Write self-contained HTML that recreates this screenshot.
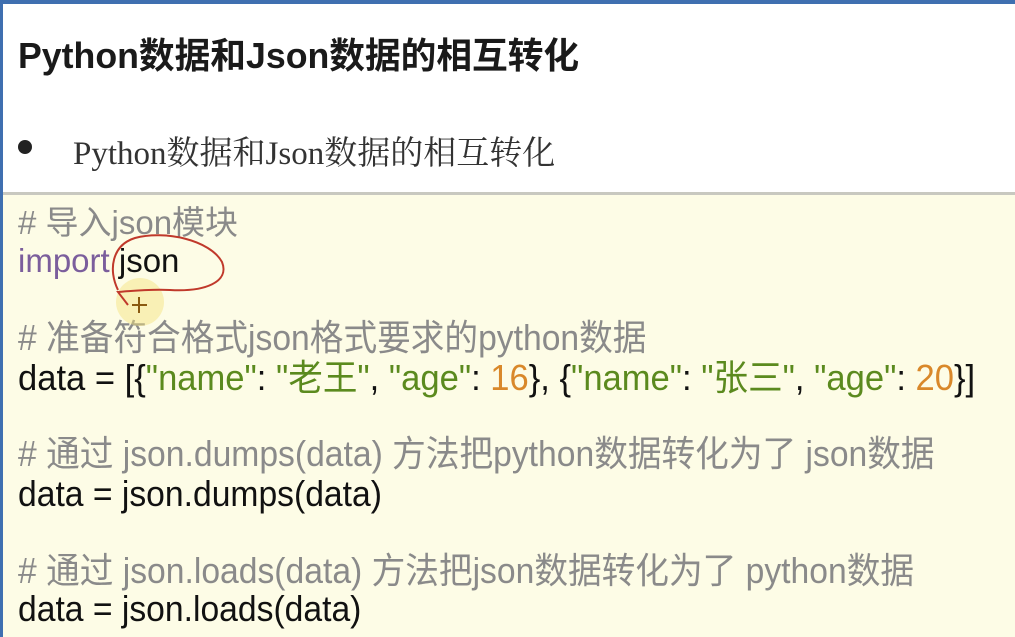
<!DOCTYPE html>
<html><head><meta charset="utf-8"><style>
html,body{margin:0;padding:0}
body{width:1015px;height:637px;overflow:hidden;position:relative;background:#fff;font-family:"Liberation Sans","Noto Sans CJK SC",sans-serif}
.top{position:absolute;left:0;top:0;width:1015px;height:4px;background:#3f6fb0}
.left{position:absolute;left:0;top:0;width:3px;height:637px;background:#3f6fb0}
.title{position:absolute;left:18px;top:28px;font-size:35.7px;font-weight:bold;color:#1a1a1a;white-space:nowrap}
.dot{position:absolute;left:18px;top:140px;width:14px;height:14px;border-radius:50%;background:#222}
.sub{position:absolute;left:73px;top:127px;font-family:"Liberation Serif","Noto Serif CJK SC",serif;font-size:33px;color:#333;white-space:nowrap}
.hr{position:absolute;left:3px;top:192px;width:1012px;height:3px;background:#c8c8c0}
.code{position:absolute;left:3px;top:195px;width:1012px;height:442px;background:#fdfce6}
.l{position:absolute;left:18px;font-size:33px;line-height:38px;white-space:nowrap;color:#111;transform-origin:0 0}
.c{color:#8a8a8a}.k{color:#7b5e9c}.s{color:#5b8a1e}.n{color:#d9882a}
.cd{font-size:36px;line-height:42px;transform:scaleX(0.935)}
</style></head><body>
<div class="top"></div>
<div class="title">Python数据和Json数据的相互转化</div>
<div class="dot"></div>
<div class="sub">Python数据和Json数据的相互转化</div>
<div class="hr"></div>
<div class="code"></div>
<div class="left"></div>
<div class="l c" style="top:204px">#&nbsp;导入json模块</div>
<div class="l" style="top:242px"><span class="k">import</span> json</div>
<div class="l c cd" style="top:317px"># 准备符合格式json格式要求的python数据</div>
<div class="l cd" style="top:357px;transform:scaleX(0.96)">data = [{<span class="s">"name"</span>: <span class="s">"老王"</span>, <span class="s">"age"</span>: <span class="n">16</span>}, {<span class="s">"name"</span>: <span class="s">"张三"</span>, <span class="s">"age"</span>: <span class="n">20</span>}]</div>
<div class="l c cd" style="top:433px"># 通过 json.dumps(data) 方法把python数据转化为了 json数据</div>
<div class="l cd" style="top:473px">data = json.dumps(data)</div>
<div class="l c cd" style="top:550px"># 通过 json.loads(data) 方法把json数据转化为了 python数据</div>
<div class="l cd" style="top:588px">data = json.loads(data)</div>
<svg style="position:absolute;left:0;top:0" width="1015" height="637">
<circle cx="140" cy="302" r="24" fill="#f5e27a" opacity="0.45"/>
<path d="M118 290 C108 270,112 245,135 238 C165 230,210 240,222 262 C230 282,205 292,170 290 C150 289,130 291,118 292 L128 305" fill="none" stroke="#c0392b" stroke-width="2"/>
<path d="M139 297 V313 M132 305 H147" stroke="#8a5a10" stroke-width="2"/>
</svg>
</body></html>
